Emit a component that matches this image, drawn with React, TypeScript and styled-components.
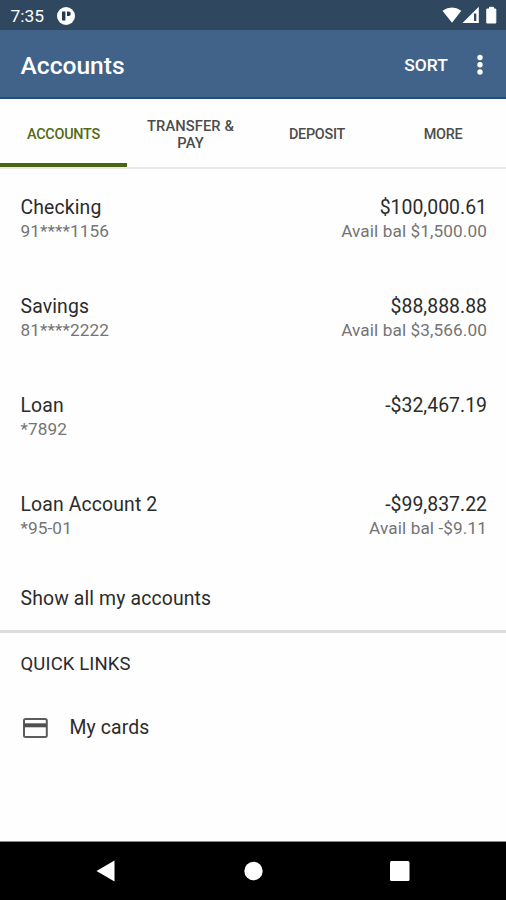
import React from "react";
import styled, { createGlobalStyle } from "styled-components";

const GlobalStyle = createGlobalStyle`
  * { box-sizing: border-box; }
  body { margin: 0; background: #fff; font-family: Roboto, sans-serif; }
`;

const Screen = styled.div`
  width: 506px;
  height: 900px;
  display: flex;
  flex-direction: column;
  background: #fefefe;
  color: #2b2b2b;
  overflow: hidden;
`;

const StatusBar = styled.div`
  height: 30px;
  flex: none;
  display: flex;
  align-items: center;
  justify-content: space-between;
  background: #2f4860;
  color: #fff;
`;

const StatusLeft = styled.div`
  display: flex;
  align-items: center;
  gap: 13px;
  padding: 1px 0 0 10.5px;
`;

const Clock = styled.span`
  font-size: 17.4px;
  line-height: 20px;
`;

const Glyph = styled.svg`
  display: block;
  flex: none;
`;

const AppBar = styled.header`
  height: 69px;
  flex: none;
  display: flex;
  align-items: center;
  padding: 3px 16px 0 20.5px;
  background: #416389;
  border-bottom: 2px solid #1d4f7e;
  color: #fff;
`;

const Title = styled.h1`
  margin: 0;
  padding-top: 2px;
  flex: 1;
  font-size: 24.6px;
  font-weight: 500;
  line-height: 30px;
`;

const SortButton = styled.button`
  border: 0;
  padding: 0;
  margin-right: 22px;
  background: none;
  color: inherit;
  font: 500 17.4px/20px Roboto, sans-serif;
  letter-spacing: 0.1px;
`;

const Tabs = styled.nav`
  height: 70px;
  flex: none;
  display: grid;
  grid-template-columns: 127px 127px 126px 126px;
  border-bottom: 2px solid #e9e9e9;
`;

const Tab = styled.div<{ $active?: boolean; $wrapped?: boolean }>`
  display: flex;
  align-items: center;
  justify-content: center;
  padding: ${(p) => (p.$active ? "6px 12px 0" : p.$wrapped ? "3px 12px 0" : "2px 12px 0")};
  border-bottom: ${(p) => (p.$active ? "4px solid #4d6412" : "0")};
  color: ${(p) => (p.$active ? "#546a16" : "#4c4c4c")};
  font-size: ${(p) => (p.$wrapped ? 14.7 : 14.4)}px;
  font-weight: 500;
  line-height: 17px;
  letter-spacing: ${(p) => (p.$wrapped ? 0.1 : -0.25)}px;
  text-align: center;
`;

const AccountRow = styled.div`
  height: 99px;
  flex: none;
  display: flex;
  justify-content: space-between;
  padding: 26px 19px 0 20.5px;
`;

const Column = styled.div<{ $end?: boolean }>`
  display: flex;
  flex-direction: column;
  gap: 1px;
  text-align: ${(p) => (p.$end ? "right" : "left")};
`;

const Primary = styled.span`
  font-size: 19.4px;
  line-height: 25px;
  letter-spacing: 0.13px;
`;

const Balance = styled(Primary)`
  letter-spacing: 0.03px;
`;

const Secondary = styled.span`
  font-size: 17.2px;
  line-height: 21px;
  letter-spacing: 0.1px;
  color: #747474;
`;

const ShowAll = styled.div`
  height: 68px;
  flex: none;
  display: flex;
  align-items: center;
  padding: 2px 20px 0 20.5px;
  border-bottom: 3px solid #dcdcdc;
`;

const QuickHeading = styled.h2`
  margin: 0;
  height: 60px;
  flex: none;
  display: flex;
  align-items: center;
  padding: 1px 20px 0 20.5px;
  font-size: 18.5px;
  font-weight: 400;
  letter-spacing: 0.13px;
`;

const QuickLink = styled.div`
  height: 68px;
  flex: none;
  display: flex;
  align-items: center;
  gap: 21.5px;
  padding: 1px 20px 0 23px;
`;

const NavBar = styled.footer`
  height: 59px;
  flex: none;
  margin-top: auto;
  display: flex;
  align-items: center;
  justify-content: space-between;
  padding: 0 96px;
  background: #000;
  border-top: 1px solid #8a8a8a;
`;

const accounts = [
  { name: "Checking", number: "91****1156", balance: "$100,000.61", available: "Avail bal $1,500.00" },
  { name: "Savings", number: "81****2222", balance: "$88,888.88", available: "Avail bal $3,566.00" },
  { name: "Loan", number: "*7892", balance: "-$32,467.19" },
  { name: "Loan Account 2", number: "*95-01", balance: "-$99,837.22", available: "Avail bal -$9.11" },
];

export default function App() {
  return (
    <Screen>
      <GlobalStyle />
      <StatusBar>
        <StatusLeft>
          <Clock>7:35</Clock>
          <Glyph width="18" height="18" viewBox="0 0 18 18">
            <circle cx="9" cy="9" r="9" fill="#fff" />
            <path d="M5 4.5h3.4v9H5zM10 4.5h1.6a2.2 2.2 0 0 1 0 4.4H10z" fill="#22395c" />
          </Glyph>
        </StatusLeft>
        <Glyph width="64" height="20" viewBox="0 0 64 20">
          <path d="M.5 5.8Q10 -1 19.3 5.8L10 17.8Z" fill="#fff" />
          <path d="M20.5 18 36.8 1.8V18z" fill="#fff" />
          <path d="M32 8.5h2.3V16H32z" fill="#2f4860" />
          <path d="M47.5 2.3h4V4h2.3v14h-9V4h2.7z" fill="#fff" stroke="#fff" strokeWidth="1" strokeLinejoin="round" />
        </Glyph>
      </StatusBar>
      <AppBar>
        <Title>Accounts</Title>
        <SortButton>SORT</SortButton>
        <Glyph width="20" height="24" viewBox="0 0 20 24" fill="#fff">
          <circle cx="10" cy="4.5" r="2.7" />
          <circle cx="10" cy="11.7" r="2.7" />
          <circle cx="10" cy="19" r="2.7" />
        </Glyph>
      </AppBar>
      <Tabs>
        <Tab $active>ACCOUNTS</Tab>
        <Tab $wrapped>TRANSFER &amp; PAY</Tab>
        <Tab>DEPOSIT</Tab>
        <Tab>MORE</Tab>
      </Tabs>
      {accounts.map((a) => (
        <AccountRow key={a.name}>
          <Column>
            <Primary>{a.name}</Primary>
            <Secondary>{a.number}</Secondary>
          </Column>
          <Column $end>
            <Balance>{a.balance}</Balance>
            {a.available && <Secondary>{a.available}</Secondary>}
          </Column>
        </AccountRow>
      ))}
      <ShowAll>
        <Primary>Show all my accounts</Primary>
      </ShowAll>
      <QuickHeading>QUICK LINKS</QuickHeading>
      <QuickLink>
        <Glyph width="25" height="20" viewBox="0 0 25 20">
          <rect x="1" y="1" width="22.8" height="18" rx="1.5" fill="none" stroke="#5c5c5c" strokeWidth="2" />
          <path d="M1 5.3h23v4H1z" fill="#505050" />
        </Glyph>
        <Primary>My cards</Primary>
      </QuickLink>
      <NavBar>
        <Glyph width="19" height="22" viewBox="0 0 19 22">
          <path d="M.5 11 18.5 .5v21z" fill="#fff" />
        </Glyph>
        <Glyph width="20" height="20" viewBox="0 0 20 20">
          <circle cx="10.5" cy="10" r="9.2" fill="#fff" />
        </Glyph>
        <Glyph width="20" height="20" viewBox="0 0 20 20">
          <rect width="19.5" height="20" rx="1.5" fill="#fff" />
        </Glyph>
      </NavBar>
    </Screen>
  );
}
